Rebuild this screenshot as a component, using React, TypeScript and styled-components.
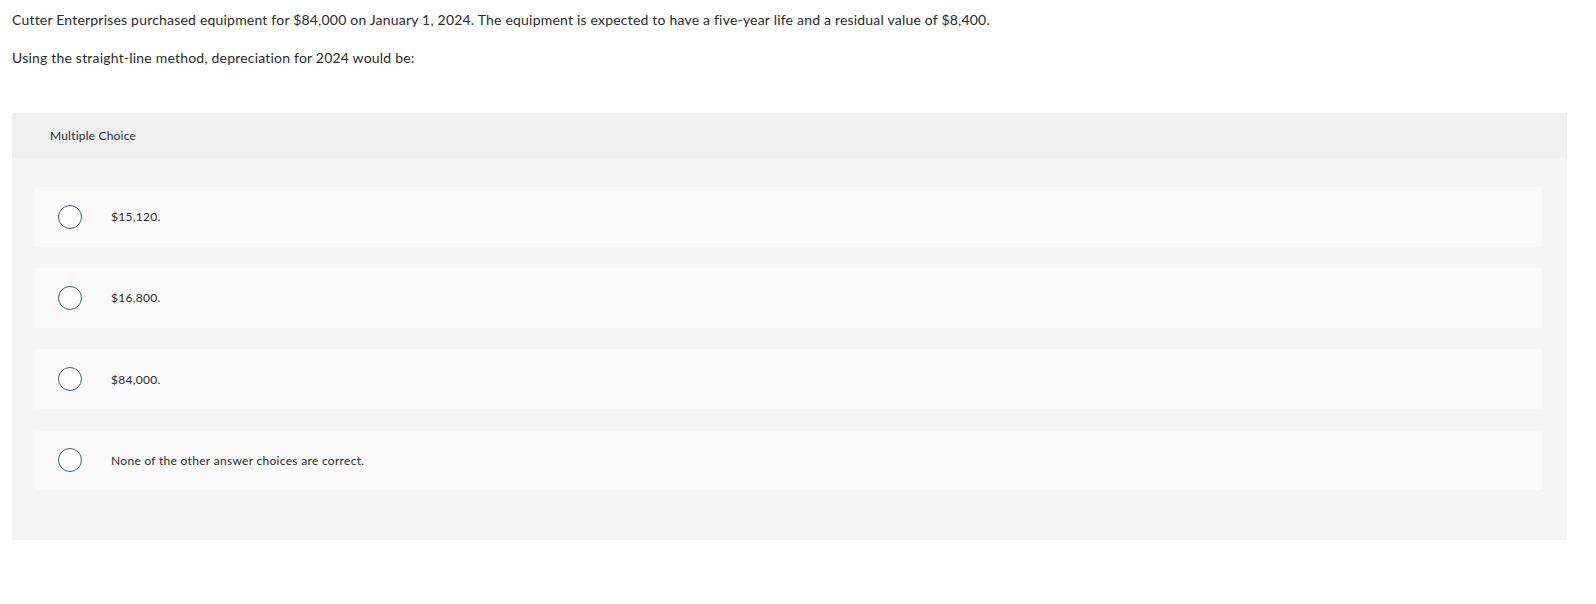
import React from 'react';
import styled, { createGlobalStyle } from 'styled-components';

const GlobalStyle = createGlobalStyle`
  body {
    margin: 0;
    background: #ffffff;
    font-family: 'Lato', 'Open Sans', sans-serif;
    color: #2b2b2b;
  }
`;

const Page = styled.div`
  padding: 0 29px 0 12px;
`;

const Prompt = styled.p`
  margin: 10px 0 18px;
  font-size: 14px;
  line-height: 20px;
  letter-spacing: 0.2px;
`;

const Panel = styled.section`
  margin-top: 45px;
  background: #f5f5f5;
  border-radius: 2px;
`;

const PanelHeader = styled.div`
  height: 45px;
  display: flex;
  align-items: center;
  padding-left: 38px;
  background: #f0f0f0;
  font-size: 12px;
  letter-spacing: 0.2px;
`;

const Choices = styled.div`
  display: flex;
  flex-direction: column;
  gap: 21.7px;
  padding: 29px 25px 50px 23px;
`;

const Choice = styled.label`
  height: 59.5px;
  display: flex;
  align-items: center;
  padding-left: 23px;
  background: #fafafa;
  border-radius: 3px;
  font-size: 12px;
  letter-spacing: 0.3px;
  cursor: pointer;
`;

const Radio = styled.span`
  width: 24px;
  height: 24px;
  box-sizing: border-box;
  border: 1.5px solid #2a5f96;
  border-radius: 50%;
  background: #ffffff;
  margin-right: 29px;
  flex-shrink: 0;
`;

const answers = ['$15,120.', '$16,800.', '$84,000.', 'None of the other answer choices are correct.'];

function App() {
  return (
    <Page>
      <GlobalStyle />
      <Prompt>
        Cutter Enterprises purchased equipment for $84,000 on January 1, 2024. The equipment is expected to have a
        five-year life and a residual value of $8,400.
      </Prompt>
      <Prompt>Using the straight-line method, depreciation for 2024 would be:</Prompt>
      <Panel>
        <PanelHeader>Multiple Choice</PanelHeader>
        <Choices>
          {answers.map((a) => (
            <Choice key={a}>
              <Radio />
              {a}
            </Choice>
          ))}
        </Choices>
      </Panel>
    </Page>
  );
}

export default App;
